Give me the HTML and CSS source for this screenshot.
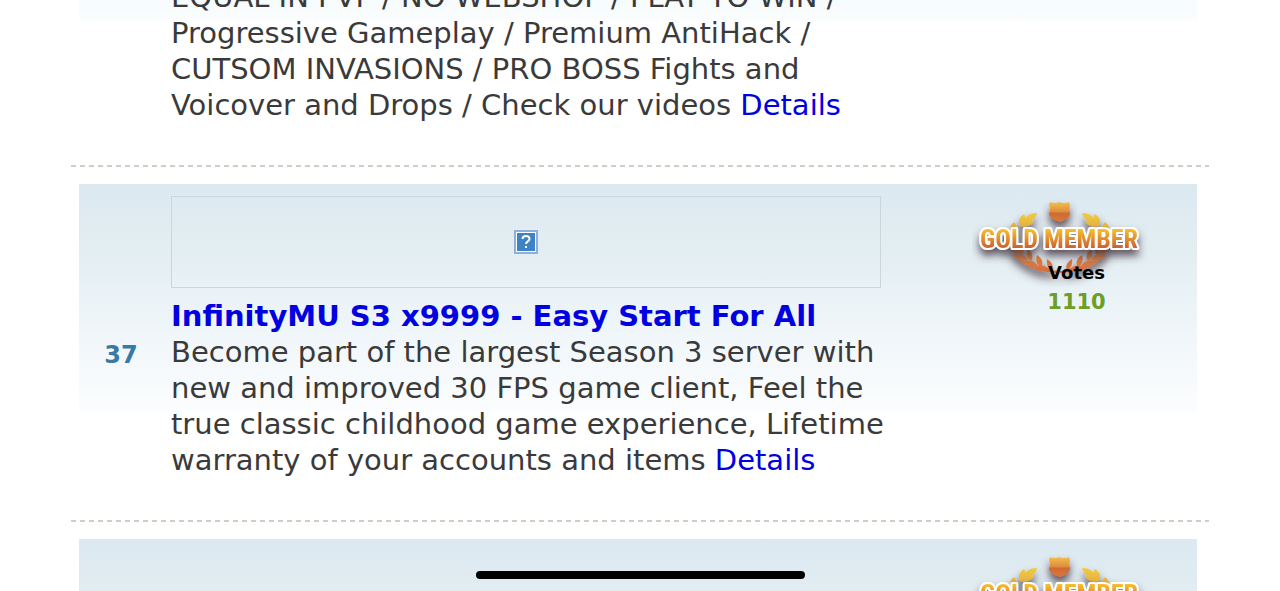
FILE: index.html
```
<!DOCTYPE html>
<html lang="en">
<head>
    <meta charset="UTF-8">
    <meta name="viewport" content="width=device-width, initial-scale=1.0">
    <title>Top MU Online Servers</title>
    <link rel="stylesheet" href="styles.css">
</head>
<body>
    <!-- shared gold member badge -->
    <svg class="defs" width="0" height="0" aria-hidden="true">
        <defs>
            <linearGradient id="gold" x1="0" y1="0" x2="0" y2="1">
                <stop offset="0" stop-color="#f3c04a"/>
                <stop offset="0.5" stop-color="#dd8a3c"/>
                <stop offset="0.55" stop-color="#cf6a34"/>
                <stop offset="1" stop-color="#d9773a"/>
            </linearGradient>
            <linearGradient id="letters" gradientUnits="userSpaceOnUse" x1="0" y1="29" x2="0" y2="51">
                <stop offset="0" stop-color="#fccb2c"/>
                <stop offset="1" stop-color="#cb5a30"/>
            </linearGradient>
            <linearGradient id="wreath" gradientUnits="userSpaceOnUse" x1="0" y1="12" x2="0" y2="76">
                <stop offset="0" stop-color="#f2d13c"/>
                <stop offset="0.4" stop-color="#e2a046"/>
                <stop offset="1" stop-color="#d7683f"/>
            </linearGradient>
            <filter id="shadow" x="-20%" y="-30%" width="140%" height="190%">
                <feDropShadow dx="0" dy="6" stdDeviation="4" flood-color="#3b2a38" flood-opacity="0.8"/>
            </filter>
            <g id="half" fill="url(#wreath)">
                <path d="M65 15c-7 0-12 3-13 8 7 1 12-2 13-8z"/>
                <path d="M52 16c-5 3-6 7-4 11 5-2 7-6 4-11z"/>
                <path d="M62 23c-6-2-12 0-14 5 6 2 11 0 14-5z"/>
                <path d="M42 24c-4 3-5 6-2 10h5c1-4 0-7-3-10z"/>
                <path d="M48 56c-7-1-12-4-12-8 7-1 12 2 12 8z"/>
                <path d="M56 62c-8 1-13-1-15-5 7-2 13 0 15 5z"/>
                <path d="M66 68c-8 1-13 0-16-4 7-3 13-1 16 4z"/>
                <path d="M78 72c-8 2-13 1-17-2 6-4 13-3 17 2z"/>
                <path d="M50 57c3-4 2-8-2-11-3 4-2 9 2 11z"/>
                <path d="M59 63c3-4 1-9-3-12-3 5-1 10 3 12z"/>
                <path d="M69 69c3-4 1-9-4-12-2 5 0 10 4 12z"/>
                <path d="M80 72c2-4 0-8-5-11-1 5 1 9 5 11z"/>
                <path d="M40 50c9 14 24 22 47 23v2c-25-1-41-9-47-25z"/>
            </g>
            <symbol id="gold-badge" viewBox="0 0 176 92">
                <g filter="url(#shadow)">
                    <use href="#half"/>
                    <use href="#half" transform="translate(175 0) scale(-1 1)"/>
                    <path d="M78 4q5 2 9 0q5 2 10 0l1 3q-1 3 0 8c0 5-5 7-10 9c-6-2-11-4-11-9q2-5 0-8z" fill="url(#gold)"/>
                </g>
                <text class="badge-text" x="87" y="50" text-anchor="middle" filter="url(#shadow)">GOLD MEMBER</text>
            </symbol>
        </defs>
    </svg>

    <main class="list">
        <article class="server server-cut">
            <div class="info">
                <p>EQUAL IN PVP / NO WEBSHOP / PLAY TO WIN /<br>
                Progressive Gameplay / Premium AntiHack /<br>
                CUTSOM INVASIONS / PRO BOSS Fights and<br>
                Voicover and Drops / Check our videos <a href="#">Details</a></p>
            </div>
        </article>

        <article class="server">
            <div class="rank">37</div>
            <div class="info">
                <a class="banner" href="#" aria-label="Server banner">
                    <svg width="24" height="24" viewBox="0 0 24 24">
                        <rect width="24" height="24" fill="#8eafdb"/>
                        <rect x="2" y="2" width="20" height="20" fill="#fff"/>
                        <rect x="3" y="3" width="18" height="18" fill="#3f83c4"/>
                        <path d="M8.500 9q0-3 3.500-3t3.500 2.800q0 1.600-1.700 2.600t-1.700 2.600" fill="none" stroke="#fff" stroke-width="2"/>
                        <rect x="11" y="16" width="2" height="2" fill="#fff"/>
                    </svg>
                </a>
                <h2><a href="#">InfinityMU S3 x9999 - Easy Start For All</a></h2>
                <p>Become part of the largest Season 3 server with<br>
                new and improved 30 FPS game client, Feel the<br>
                true classic childhood game experience, Lifetime<br>
                warranty of your accounts and items <a href="#">Details</a></p>
            </div>
            <div class="votes">
                <svg class="badge" viewBox="0 0 176 92"><use href="#gold-badge"/></svg>
                <div class="votes-label">Votes</div>
                <div class="votes-count">1110</div>
            </div>
        </article>

        <article class="server">
            <div class="votes">
                <svg class="badge" viewBox="0 0 176 92"><use href="#gold-badge"/></svg>
            </div>
        </article>
    </main>
    <div class="home-bar"></div>
</body>
</html>
```
FILE: styles.css
```
* {
    box-sizing: border-box;
}
body {
    margin: 0;
    height: 100vh;
    overflow: hidden;
    background: #fff;
    color: #3a3a3a;
    font-family: Verdana, "DejaVu Sans", sans-serif;
    font-size: 29px;
    line-height: 36px;
}
a {
    color: #0000e0;
    text-decoration: none;
}
h2, p {
    margin: 0;
    font-size: 29px;
    white-space: nowrap;
}
.defs {
    position: absolute;
}
.list {
    padding: 0 71px;
}
.server {
    display: grid;
    grid-template-columns: 92px minmax(0, 1fr) 241px;
    margin: 17px 12px 0 8px;
    padding: 12px 0 44px;
    min-height: 230px;
    background: linear-gradient(#dce9f1, #e3eef2 30%, #eef5f9 60%, #fcfdfe) no-repeat;
    background-size: 100% 229px;
    position: relative;
}
/* dashed line under each row, a bit wider than the row */
.server::after {
    content: "";
    position: absolute;
    left: -8px;
    right: -12px;
    bottom: 0;
    height: 2px;
    background: repeating-linear-gradient(90deg, #cfcfc4 0 5px, transparent 5px 9px);
}
.server-cut {
    margin-top: 0;
    padding-top: 0;
    min-height: 0;
    background: linear-gradient(#f6fbfd, #fbfdfe) no-repeat;
    background-size: 100% 21px;
}
.server-cut .info {
    margin-top: -21px;
}
.info {
    grid-column: 2;
    margin-right: 75px;
}
.banner {
    display: flex;
    justify-content: center;
    align-items: center;
    height: 92px;
    margin-bottom: 10px;
    border: 1px solid #cbd6db;
}
.rank {
    align-self: center;
    padding: 36px 8px 0 0;
    text-align: center;
    color: #367ba5;
    font-size: 24px;
    font-weight: bold;
}
.votes {
    grid-column: 3;
    position: relative;
    padding-top: 63px;
    text-align: center;
    font-weight: bold;
}
.badge {
    position: absolute;
    top: 2px;
    left: 16px;
    width: 176px;
    height: 92px;
}
.badge-text {
    font-family: "Liberation Sans Narrow", "Roboto Condensed", "Open Sans Condensed", Roboto, sans-serif;
    font-size: 26px;
    font-weight: bold;
    fill: url(#letters);
    stroke: #fff;
    stroke-width: 4px;
    stroke-linejoin: round;
    paint-order: stroke;
}
.votes-label {
    position: relative;
    color: #000;
    font-size: 18px;
    line-height: 28px;
}
.votes-count {
    position: relative;
    color: #6c9e28;
    font-size: 21px;
    line-height: 30px;
}
.home-bar {
    position: fixed;
    bottom: 12px;
    left: 50%;
    width: 329px;
    height: 8px;
    margin-left: -164px;
    border-radius: 4px;
    background: #000;
}
```
